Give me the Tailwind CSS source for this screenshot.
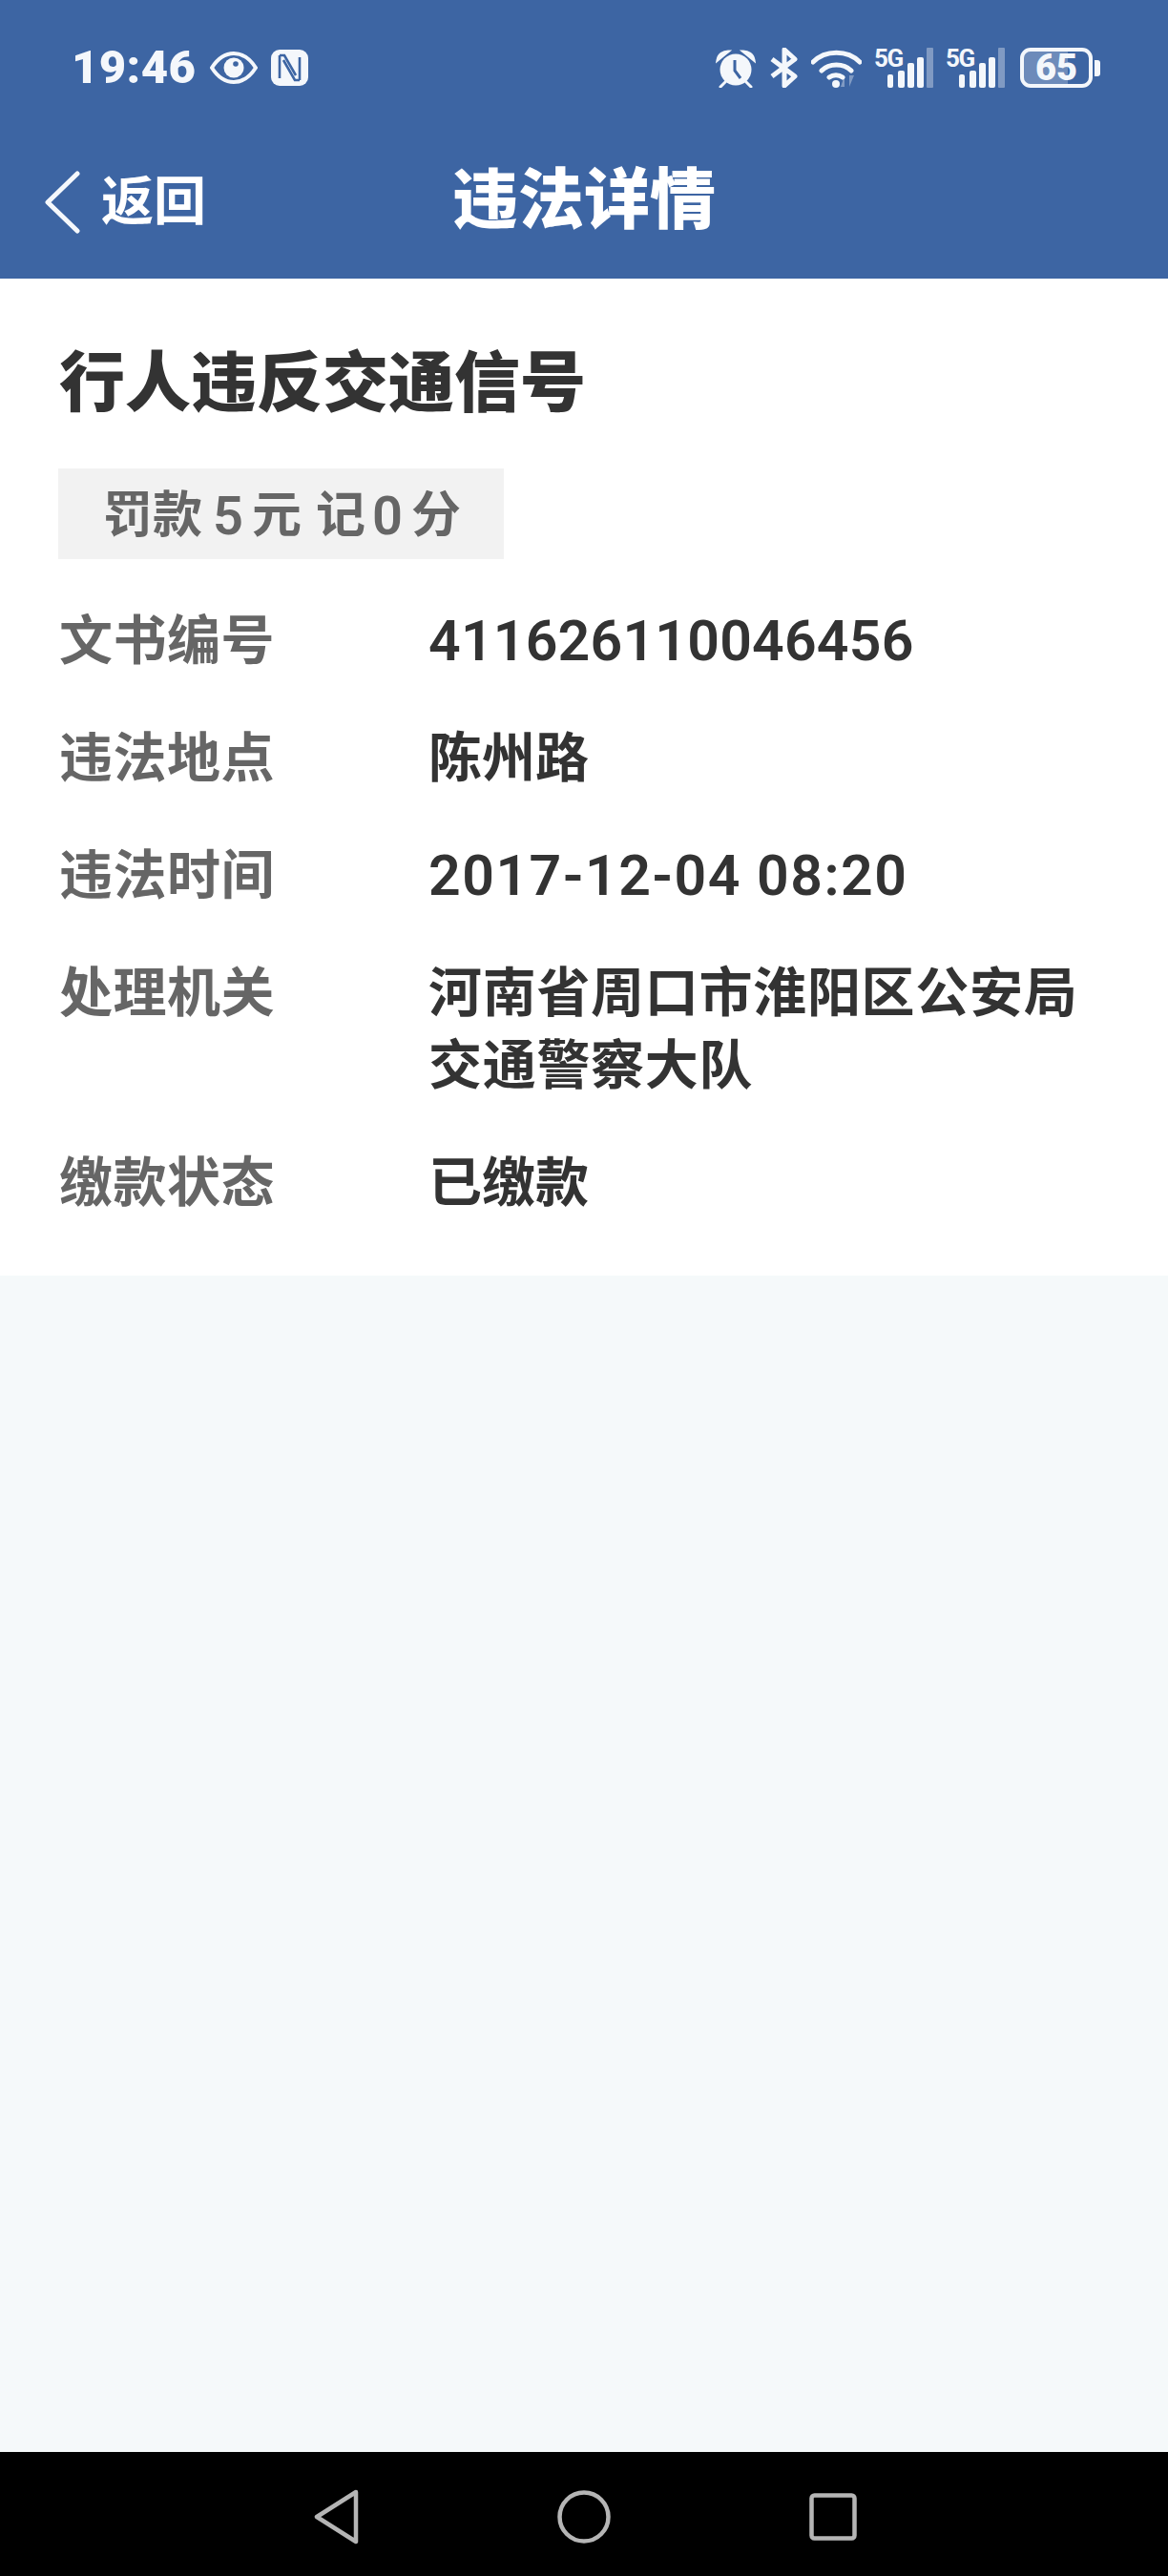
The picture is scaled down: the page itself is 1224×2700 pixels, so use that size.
<!DOCTYPE html>
<html lang="zh">
<head>
<meta charset="utf-8">
<script src="https://cdn.jsdelivr.net/npm/@tailwindcss/browser@4"></script>
</head>
<body class="m-0">
<div class="w-[1224px] h-[2700px] flex flex-col bg-[#f5f9fa] overflow-hidden font-['Roboto','Noto_Sans_CJK_SC',sans-serif]">
  <header class="h-[292px] bg-[#3d65a3] text-white flex flex-col shrink-0">
    <div class="h-[144px] flex items-start justify-between pl-[75px] pr-[71px] pt-[50px]">
      <div class="flex items-center h-[42px] text-[#f4f7fb]">
        <span class="text-[49px] leading-[42px] font-black tracking-[0.4px] w-[145px]">19:46</span>
        <svg width="50" height="34" viewBox="0 0 50 34" class="mr-[14px]"><path d="M2 17C9 6 16 2 25 2s16 4 23 15c-7 11-14 15-23 15S9 28 2 17Z" fill="none" stroke="currentColor" stroke-width="4"/><circle cx="25" cy="17" r="10.5" fill="currentColor"/><circle cx="27" cy="13" r="2.8" fill="#3d65a3"/></svg>
        <svg width="39" height="38" viewBox="0 0 39 38"><rect x="0" y="0" width="39" height="38" rx="9" fill="currentColor"/><path d="M9 6v24M9 6h5l12 21M30 8v24M30 32h-5L13 11" fill="none" stroke="#3d65a3" stroke-width="2.6"/></svg>
      </div>
      <div class="flex items-start h-[42px] text-[#f4f7fb]">
        <svg width="42" height="40" viewBox="0 0 42 40" class="mt-[2px] mr-[14px]"><circle cx="21" cy="21" r="16.5" fill="currentColor"/><path d="M2 11c1-6 6-9 11-9zM40 11c-1-6-6-9-11-9zM10 34l-5 5M32 34l5 5" fill="currentColor" stroke="currentColor" stroke-width="3" stroke-linecap="round"/><path d="M20 11v11l6 8" fill="none" stroke="#3d65a3" stroke-width="3"/></svg>
        <svg width="32" height="42" viewBox="0 0 32 42" class="mr-[12px]"><path d="M3 12l24 18-11 10V2l11 10L3 30" fill="none" stroke="currentColor" stroke-width="5" stroke-linejoin="round"/></svg>
        <svg width="53" height="42" viewBox="0 0 53 42" class="mr-[13px]"><path d="M2 15C15 2 38 2 51 15M11 24c8-8 23-8 31 0M19 31c4-3 10-3 14 0" fill="none" stroke="currentColor" stroke-width="5" stroke-linecap="round"/><circle cx="26" cy="38" r="4" fill="currentColor"/><path d="M35 41V29l-4 12zM40 29v12l5-12z" fill="#fff" fill-opacity=".35"/></svg>
        <div class="relative w-[62px] h-[42px] mr-[13px]">
          <span class="absolute left-0 top-[-2px] text-[26px] leading-[26px] font-bold tracking-[-1.5px]">5G</span>
          <svg width="62" height="42" viewBox="0 0 62 42"><rect x="14" y="28" width="6" height="14" rx="2" fill="currentColor"/><rect x="25" y="24" width="7" height="18" rx="2" fill="currentColor"/><rect x="35" y="16" width="7" height="26" rx="2" fill="currentColor"/><rect x="45" y="10" width="7" height="32" rx="2" fill="currentColor"/><rect x="55" y="0" width="7" height="42" rx="1" fill="#fff" fill-opacity=".35"/></svg>
        </div>
        <div class="relative w-[62px] h-[42px] mr-[16px]">
          <span class="absolute left-0 top-[-2px] text-[26px] leading-[26px] font-bold tracking-[-1.5px]">5G</span>
          <svg width="62" height="42" viewBox="0 0 62 42"><rect x="14" y="28" width="6" height="14" rx="2" fill="currentColor"/><rect x="25" y="24" width="7" height="18" rx="2" fill="currentColor"/><rect x="35" y="16" width="7" height="26" rx="2" fill="currentColor"/><rect x="45" y="10" width="7" height="32" rx="2" fill="currentColor"/><rect x="55" y="0" width="7" height="42" rx="1" fill="#fff" fill-opacity=".35"/></svg>
        </div>
        <div class="relative w-[76px] h-[42px] rounded-[11px] border-[4px] border-[#f4f7fb] flex items-center justify-center">
          <div class="absolute inset-y-0 left-0 w-[46px] rounded-l-[7px] bg-white/25"></div>
          <span class="relative text-[38px] leading-[34px] font-black">65</span>
        </div>
        <div class="w-[6px] h-[17px] rounded-r-[3px] bg-[#f4f7fb] mt-[13px] ml-[2px]"></div>
      </div>
    </div>
    <div class="flex-1 grid grid-cols-[1fr_auto_1fr] items-center pb-[14px]">
      <div class="flex items-center pl-[46px]">
        <svg width="38" height="66" viewBox="0 0 38 66" class="mr-[22px] mt-[2px]"><path d="M35 3 4 33l31 30" fill="none" stroke="#f5f8fc" stroke-width="5" stroke-linecap="round" stroke-linejoin="round"/></svg>
        <span class="text-[55px] leading-[64px] font-bold">返回</span>
      </div>
      <h1 class="text-[69px] leading-[80px] font-black">违法详情</h1>
      <div></div>
    </div>
  </header>

  <main class="h-[1045px] bg-white shrink-0 pl-[62px] pt-[71px]">
    <h2 class="text-[69px] leading-[80px] font-black text-[#333]">行人违反交通信号</h2>
    <div class="mt-[48px] ml-[-1px] w-[467px] h-[95px] bg-[#f2f2f2] flex items-center pl-[47px] pt-[4px] text-[52px] font-bold text-[#666] whitespace-nowrap">罚款<span class="ml-[11px] mr-[9px] text-[56px] font-semibold">5</span>元<span class="ml-[15px]">记</span><span class="ml-[7px] mr-[9px] text-[56px] font-semibold">0</span>分</div>
    <dl class="mt-[48px] grid grid-cols-[387px_1fr] gap-y-[47px] text-[56px] leading-[76px] font-bold">
      <dt class="text-[#666] tracking-[0.5px]">文书编号</dt><dd class="text-[#333] text-[59px] font-semibold tracking-[0.2px]">411626110046456</dd>
      <dt class="text-[#666] tracking-[0.5px]">违法地点</dt><dd class="text-[#333]">陈州路</dd>
      <dt class="text-[#666] tracking-[0.5px]">违法时间</dt><dd class="text-[#333] text-[59px] font-semibold tracking-[1.5px]">2017-12-04 08:20</dd>
      <dt class="text-[#666] tracking-[0.5px]">处理机关</dt><dd class="text-[#333] w-[700px] tracking-[0.7px]">河南省周口市淮阳区公安局交通警察大队</dd>
      <dt class="text-[#666] tracking-[0.5px]">缴款状态</dt><dd class="text-[#333]">已缴款</dd>
    </dl>
  </main>

  <div class="flex-1"></div>

  <nav class="h-[130px] bg-black shrink-0 flex items-center justify-center text-[#b5b5b5]">
    <div class="flex items-center gap-[208px] mt-[5px] ml-[1px]">
      <svg width="48" height="58" viewBox="0 0 48 58"><path d="M45 3 4 29l41 26Z" fill="none" stroke="currentColor" stroke-width="4.5" stroke-linejoin="round"/></svg>
      <svg width="56" height="56" viewBox="0 0 56 56"><circle cx="28" cy="28" r="25.5" fill="none" stroke="currentColor" stroke-width="4.5"/></svg>
      <svg width="50" height="50" viewBox="0 0 50 50"><rect x="2.5" y="2.5" width="45" height="45" rx="3" fill="none" stroke="currentColor" stroke-width="4.5"/></svg>
    </div>
  </nav>
</div>
</body>
</html>
